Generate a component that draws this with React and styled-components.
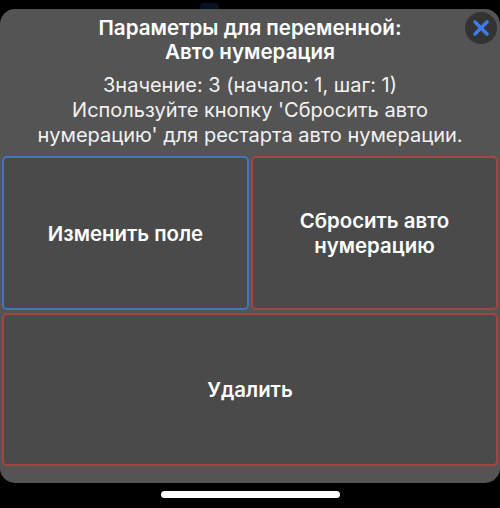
import React from "react";
import styled, { createGlobalStyle } from "styled-components";

const Global = createGlobalStyle`
  html, body { margin: 0; padding: 0; background: #000; }
  * { box-sizing: border-box; }
`;

const Screen = styled.div`
  position: relative;
  width: 500px;
  height: 508px;
  background: #000;
  padding-top: 9px;
  font-family: Inter, "Liberation Sans", sans-serif;
  color: #fff;
  overflow: hidden;
  display: flex;
  flex-direction: column;
  align-items: center;
`;

const Peek = styled.div`
  position: absolute;
  top: 3px;
  left: 200px;
  width: 19px;
  height: 8px;
  border-radius: 3px;
  background: #081220;
`;

const Sheet = styled.div`
  position: relative;
  width: 500px;
  height: 474px;
  background: #545454;
  border-radius: 15px;
  padding: 7px 2px 0;
  display: flex;
  flex-direction: column;
`;

const Title = styled.h1`
  margin: 0;
  font-size: 20.6px;
  line-height: 24px;
  font-weight: 600;
  text-align: center;
  color: #fff;
`;

const Message = styled.p`
  margin: 9px 0 0;
  font-size: 20px;
  line-height: 25px;
  font-weight: 400;
  text-align: center;
  white-space: nowrap;
  color: #f2f2f2;
`;

const Grid = styled.div`
  margin-top: 8px;
  display: grid;
  grid-template-columns: 247px 247px;
  grid-template-rows: 154px 153px;
  column-gap: 2px;
  row-gap: 3px;
`;

const Action = styled.button`
  grid-column: ${(p) => (p.$wide ? "1 / -1" : "auto")};
  background: #4a4a4a;
  border: 2px solid ${(p) => (p.$tone === "blue" ? "#4673bd" : "#a84343")};
  border-radius: 5px;
  color: #fff;
  font-family: inherit;
  font-size: 20.4px;
  line-height: 25px;
  font-weight: 600;
  padding: 0 24px;
  text-align: center;
`;

const Close = styled.button`
  position: absolute;
  top: 3px;
  right: 3px;
  width: 32px;
  height: 32px;
  padding: 0;
  border: 0;
  border-radius: 50%;
  background: #333333;
  display: flex;
  align-items: center;
  justify-content: center;
`;

const HomeBar = styled.div`
  width: 179px;
  height: 7px;
  margin-top: 8px;
  border-radius: 4px;
  background: #fff;
`;

export default function App() {
  return (
    <Screen>
      <Global />
      <Peek />
      <Sheet>
        <Title>
          Параметры для переменной:
          <br />
          Авто нумерация
        </Title>
        <Message>
          Значение: 3 (начало: 1, шаг: 1)
          <br />
          Используйте кнопку 'Сбросить авто
          <br />
          нумерацию' для рестарта авто нумерации.
        </Message>
        <Grid>
          <Action $tone="blue">Изменить поле</Action>
          <Action $tone="red">Сбросить авто нумерацию</Action>
          <Action $tone="red" $wide>
            Удалить
          </Action>
        </Grid>
        <Close aria-label="Закрыть">
          <svg width="18" height="18" viewBox="0 0 18 18" fill="none">
            <path d="M3 3L15 15M15 3L3 15" stroke="#3f7be8" strokeWidth="3.6" strokeLinecap="round" />
          </svg>
        </Close>
      </Sheet>
      <HomeBar />
    </Screen>
  );
}
